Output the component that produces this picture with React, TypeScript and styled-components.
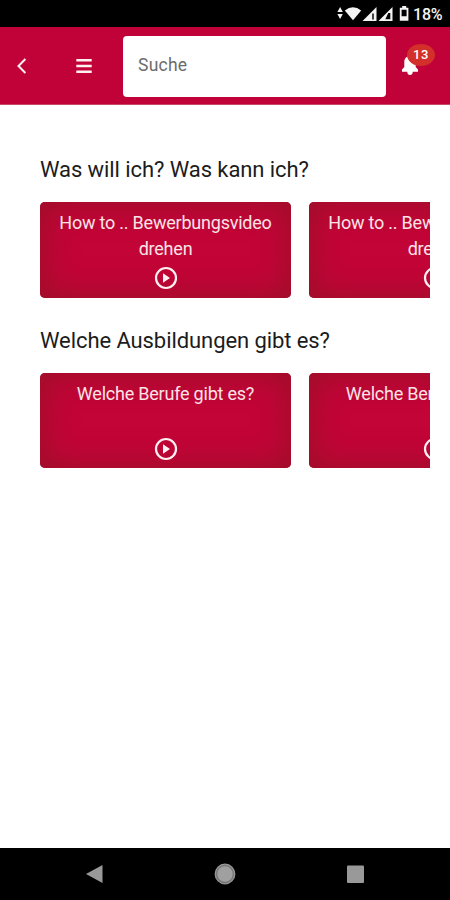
import React from "react";
import styled, { createGlobalStyle } from "styled-components";

const GlobalStyle = createGlobalStyle`
  * { box-sizing: border-box; }
  body { margin: 0; background: #fff; font-family: Roboto, "Liberation Sans", sans-serif; }
`;

const Screen = styled.div`
  width: 450px;
  height: 900px;
  display: flex;
  flex-direction: column;
  overflow: hidden;
  background: #fff;
`;

const StatusBar = styled.div`
  height: 27px;
  flex: none;
  display: flex;
  align-items: center;
  justify-content: flex-end;
  padding-right: 8px;
  background: #000;
`;

const BatteryText = styled.span`
  width: 29px;
  margin-left: 4px;
  color: #f4f4f4;
  font-size: 16px;
  font-weight: 500;
  line-height: 27px;
  padding-top: 1px;
  white-space: nowrap;
  letter-spacing: -0.2px;
`;

const Header = styled.header`
  height: 78px;
  flex: none;
  display: flex;
  align-items: center;
  padding-top: 1px;
  background: #c10238;
  border-bottom: 1px solid #c94a68;
  color: #fff;
`;

const IconButton = styled.button<{ $width: number }>`
  width: ${(p) => p.$width}px;
  height: 60px;
  padding: 0;
  border: 0;
  display: flex;
  align-items: center;
  justify-content: center;
  background: none;
  color: inherit;
`;

const SearchInput = styled.input`
  width: 263px;
  height: 61px;
  padding: 0 15px 3px;
  border: 0;
  border-radius: 4px;
  outline: none;
  background: #fff;
  font: 400 17.5px Roboto, sans-serif;
  letter-spacing: 0.25px;
  &::placeholder { color: #6c6c6c; opacity: 1; }
`;

const BellButton = styled(IconButton)`
  position: relative;
  margin-left: 10px;
`;

const Badge = styled.span`
  position: absolute;
  left: 11px;
  top: 8px;
  width: 28px;
  height: 22px;
  border-radius: 50%;
  background: #d32f2b;
  color: #fff;
  font: 500 13px/22px Roboto, sans-serif;
  letter-spacing: 0.5px;
  text-align: center;
`;

const Content = styled.main`
  flex: 1;
  padding: 49px 20px 0 40px;
`;

const Section = styled.section`
  height: 170.5px;
`;

const Heading = styled.h2`
  height: 48px;
  margin: 0;
  color: #1c1c1c;
  font-size: 22px;
  font-weight: 400;
  line-height: 31px;
  letter-spacing: -0.08px;
  white-space: nowrap;
`;

const Carousel = styled.div`
  display: flex;
  gap: 18px;
  overflow: hidden;
`;

const Card = styled.article`
  width: 251px;
  height: 95.5px;
  flex: none;
  display: flex;
  flex-direction: column;
  align-items: center;
  justify-content: space-between;
  padding: 8px 12px 7.5px;
  border-radius: 5px;
  background: #c20437;
  box-shadow: inset 0 0 32px 2px #9b1028, inset 0 0 1px #a01524;
  color: #fbe3e6;
`;

const CardTitle = styled.div`
  font-size: 18px;
  line-height: 26px;
  letter-spacing: -0.22px;
  text-align: center;
`;

const NavBar = styled.nav`
  height: 52px;
  flex: none;
  display: flex;
  align-items: center;
  justify-content: space-between;
  padding: 0 84px;
  background: #000;
`;

const NavButton = styled.button`
  width: 22px;
  height: 22px;
  padding: 0;
  border: 0;
  display: flex;
  background: none;
`;

const StatusIcons = () => (
  <svg width="72" height="27" viewBox="337 0 72 27" fill="#f4f4f4">
    <path d="M337.4 12l2.7-5 2.7 5zM337.4 14h5.4l-2.7 5z" />
    <path d="M344.8 10.5Q353 3.8 361.2 10.5L353 20.3z" />
    <path d="M376.5 7v14h-14z" />
    <path d="M372 13.5h2v6h-2z" fill="#444" />
    <path d="M392.5 7v14h-14z" />
    <path d="M388.3 13h2v6.3h-5z" fill="#050505" />
    <path fillRule="evenodd" d="M402.2 6h4v1.8h2.2v13h-8.6v-13h2.4zM401.6 9.8v6.4h5V9.8z" />
  </svg>
);

const PlayIcon = () => (
  <svg width="24" height="24" viewBox="0 0 24 24">
    <circle cx="12" cy="12" r="10" fill="none" stroke="#fff0f1" strokeWidth="2.2" />
    <path d="M9 7.3v9.4l7-4.7z" fill="#fff0f1" />
  </svg>
);

const sections = [
  { title: "Was will ich? Was kann ich?", card: "How to .. Bewerbungsvideo drehen" },
  { title: "Welche Ausbildungen gibt es?", card: "Welche Berufe gibt es?" },
];

export default function App() {
  return (
    <>
      <GlobalStyle />
      <Screen>
        <StatusBar>
          <StatusIcons />
          <BatteryText>18%</BatteryText>
        </StatusBar>
        <Header>
          <IconButton $width={44} aria-label="Zurück">
            <svg width="12" height="18" viewBox="0 0 12 18">
              <path d="M9.4 2L2.5 9l6.9 7" fill="none" stroke="#fff0f1" strokeWidth="2" />
            </svg>
          </IconButton>
          <IconButton $width={79} aria-label="Menü">
            <svg width="16" height="16" viewBox="0 0 16 16">
              <path d="M0.3 2.2h15.4M0.3 8h15.4M0.3 13.8h15.4" stroke="#fff0f1" strokeWidth="2.4" />
            </svg>
          </IconButton>
          <SearchInput placeholder="Suche" aria-label="Suche" />
          <BellButton $width={28} aria-label="Benachrichtigungen">
            <svg width="18" height="20" viewBox="0 0 18 20">
              <path d="M9 0C5.5 0 3.3 2.6 3.3 6v5L1 13.5v2.2h5.2C6.4 18 7.4 19 9 19s2.6-1 2.8-3.3H17v-2.2L14.7 11V6C14.7 2.6 12.5 0 9 0z" fill="#fff" />
            </svg>
            <Badge>13</Badge>
          </BellButton>
        </Header>
        <Content>
          {sections.map((s) => (
            <Section key={s.title}>
              <Heading>{s.title}</Heading>
              <Carousel>
                {[0, 1].map((i) => (
                  <Card key={i}>
                    <CardTitle>{s.card}</CardTitle>
                    <PlayIcon />
                  </Card>
                ))}
              </Carousel>
            </Section>
          ))}
        </Content>
        <NavBar>
          <NavButton aria-label="Zurück">
            <svg width="22" height="22" viewBox="0 0 22 22"><path d="M2 11L18.5 2v18z" fill="#999" /></svg>
          </NavButton>
          <NavButton aria-label="Startseite">
            <svg width="22" height="22" viewBox="0 0 22 22">
              <circle cx="11" cy="11" r="9.8" fill="#777" stroke="#999" strokeWidth="1.2" />
              <circle cx="11" cy="11" r="7.7" fill="#a0a0a0" />
            </svg>
          </NavButton>
          <NavButton aria-label="Übersicht">
            <svg width="22" height="22" viewBox="0 0 22 22"><rect x="3" y="2.5" width="17" height="17.5" rx="1" fill="#999" /></svg>
          </NavButton>
        </NavBar>
      </Screen>
    </>
  );
}
